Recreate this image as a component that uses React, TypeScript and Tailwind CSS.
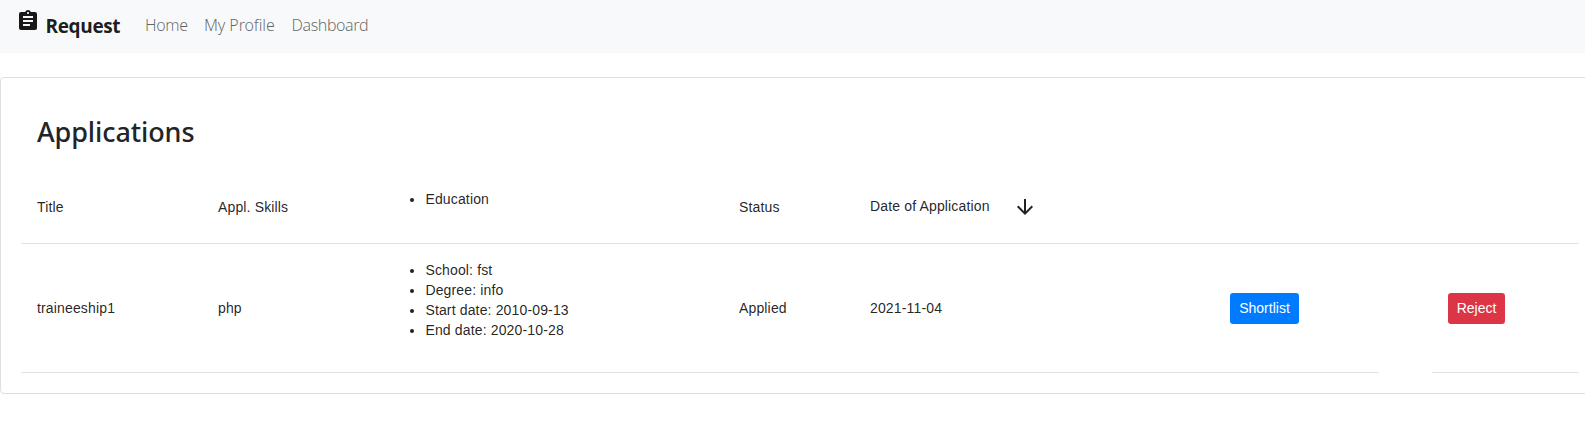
import React from "react";

const columns = [
  "w-[181px]",
  "w-[168px]",
  "w-[353px]",
  "w-[131px]",
  "w-[360px]",
  "w-[165px]",
  "w-[53px]",
  "w-[147px]",
];

const education = [
  "School: fst",
  "Degree: info",
  "Start date: 2010-09-13",
  "End date: 2020-10-28",
];

function ClipboardIcon() {
  return (
    <svg viewBox="0 0 24 24" className="h-6 w-6 fill-current">
      <path d="M19 3h-4.18C14.4 1.84 13.3 1 12 1c-1.3 0-2.4.84-2.82 2H5c-1.1 0-2 .9-2 2v14c0 1.1.9 2 2 2h14c1.1 0 2-.9 2-2V5c0-1.1-.9-2-2-2zm-7 0c.55 0 1 .45 1 1s-.45 1-1 1-1-.45-1-1 .45-1 1-1zm2 14H7v-2h7v2zm3-4H7v-2h10v2zm0-4H7V7h10v2z" />
    </svg>
  );
}

function ArrowDownIcon() {
  return (
    <svg viewBox="0 0 24 24" className="h-6 w-6 fill-current">
      <path d="M20 12l-1.41-1.41L13 16.17V4h-2v12.17l-5.58-5.59L4 12l8 8 8-8z" />
    </svg>
  );
}

function NavBar() {
  return (
    <nav className="flex h-[53px] items-start bg-[#f8f9fa] pl-4 font-['Open_Sans',sans-serif]">
      <a className="flex text-black/90">
        <span className="mt-[9px]">
          <ClipboardIcon />
        </span>
        <span className="ml-[5.5px] w-[99.5px] whitespace-nowrap pt-[11px] text-[19px] font-bold leading-[30px] tracking-[-0.35px]">
          Request
        </span>
      </a>
      <div className="flex whitespace-nowrap pt-[13px] font-['Noto_Sans','Open_Sans',sans-serif] text-[16px] font-light leading-6 text-black/60">
        <a className="w-[59px] tracking-[-0.4px]">Home</a>
        <a className="w-[87.5px] tracking-[-0.1px]">My Profile</a>
        <a className="tracking-[-0.4px]">Dashboard</a>
      </div>
    </nav>
  );
}

export default function App() {
  return (
    <div className="h-[432px] overflow-hidden bg-white text-[#212529]">
      <NavBar />
      <main className="mt-6 h-[317px] w-[1600px] rounded border border-[#dfdfdf] pl-5">
        <h3 className="h-[93px] pl-4 pt-[37px] font-['Noto_Sans','Open_Sans',sans-serif] text-[27px] font-medium leading-[34px] tracking-[-0.1px]">
          Applications
        </h3>
        <table className="w-[1558px] table-fixed border-separate border-spacing-0 text-left font-['Liberation_Sans',sans-serif] text-[14px] leading-[20px] tracking-[0.15px] text-black/87">
          <colgroup>
            {columns.map((width, i) => (
              <col key={i} className={width} />
            ))}
          </colgroup>
          <thead>
            <tr className="h-[73px] [&>th]:border-b [&>th]:border-[#e0e0e0] [&>th]:px-4 [&>th]:py-0 [&>th]:font-normal">
              <th>Title</th>
              <th>Appl. Skills</th>
              <th>
                <ul className="mb-4 list-disc pl-[39.4px]">
                  <li>Education</li>
                </ul>
              </th>
              <th>Status</th>
              <th>
                <div className="flex items-center">
                  <span className="w-[143px] pb-[2px]">Date of Application</span>
                  <ArrowDownIcon />
                </div>
              </th>
              <th />
              <th />
              <th />
            </tr>
          </thead>
          <tbody>
            <tr className="h-[129px] [&>td]:border-[#e0e0e0] [&>td]:px-4 [&>td]:py-0">
              <td className="border-b">traineeship1</td>
              <td className="border-b">php</td>
              <td className="border-b">
                <ul className="mb-4 list-disc pl-[39.4px]">
                  {education.map((item) => (
                    <li key={item}>{item}</li>
                  ))}
                </ul>
              </td>
              <td className="border-b">Applied</td>
              <td className="border-b">2021-11-04</td>
              <td className="border-b">
                <button className="block h-[31px] w-[69px] rounded-[3.2px] bg-[#007bff] text-[14px] leading-[21px] tracking-normal text-white">
                  Shortlist
                </button>
              </td>
              <td />
              <td className="border-b">
                <button className="block h-[31px] w-[57px] rounded-[3.2px] bg-[#dc3545] text-[14px] leading-[21px] tracking-normal text-white">
                  Reject
                </button>
              </td>
            </tr>
          </tbody>
        </table>
      </main>
    </div>
  );
}
